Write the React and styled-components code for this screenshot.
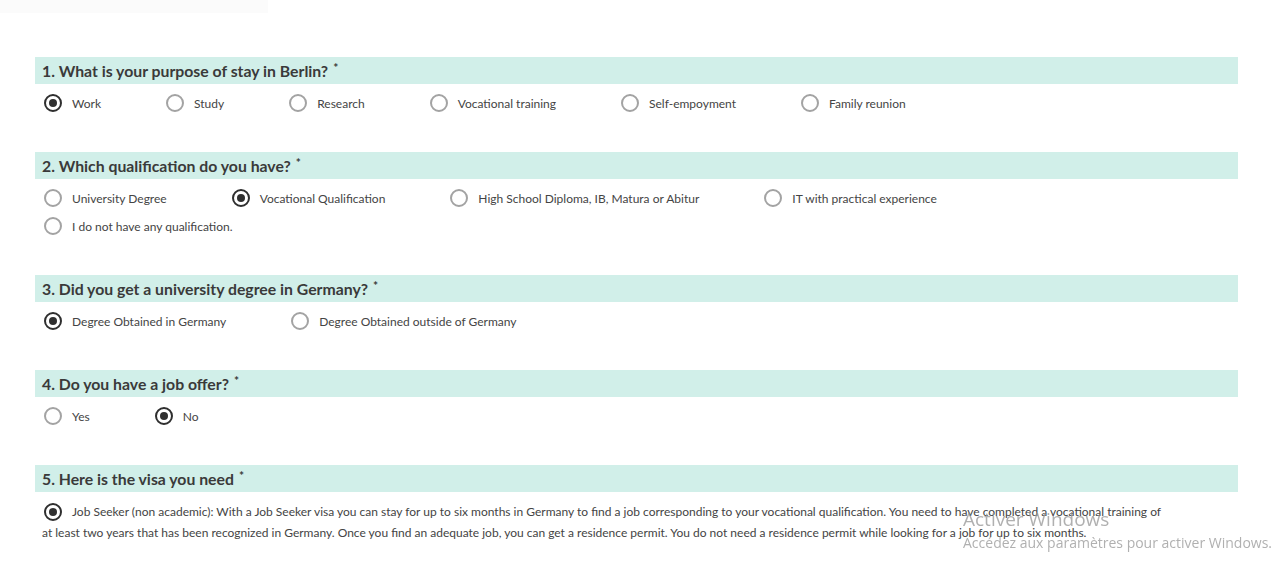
import React from "react";
import styled, { createGlobalStyle } from "styled-components";

const GlobalStyle = createGlobalStyle`
	body {
		margin: 0;
		background: #ffffff;
		font-family: Lato, "Open Sans", Arial, sans-serif;
		color: #444444;
	}
`;

const TopStrip = styled.div`
	width: 268px;
	height: 13px;
	background: #fbfbfb;
`;

const Form = styled.div`
	margin: 44px 46px 0 35px;
`;

const Section = styled.section`
	margin-bottom: 35px;
`;

const QuestionBar = styled.h2`
	margin: 0;
	height: 27px;
	display: flex;
	align-items: center;
	padding-left: 7px;
	background: #d1efe9;
	font-family: Lato, "Open Sans", sans-serif;
	font-weight: 700;
	font-size: 15.8px;
	color: #3a3a3a;

	sup {
		font-size: 12px;
		margin-left: 5px;
		position: relative;
		top: -3px;
	}
`;

const Options = styled.div`
	display: flex;
	flex-wrap: wrap;
	padding: 5px 50px 0 9px;
`;

const Option = styled.label`
	display: inline-flex;
	align-items: center;
	height: 28px;
	margin-right: 65px;
	font-size: 12px;
	color: #444444;
	cursor: pointer;
`;

const Radio = styled.span`
	display: inline-flex;
	align-items: center;
	justify-content: center;
	box-sizing: border-box;
	width: 18px;
	height: 18px;
	border-radius: 50%;
	border: 2px solid ${(p) => (p.$checked ? "#2f2f2f" : "#a3a3a3")};
	margin-right: 10px;
	flex-shrink: 0;
	vertical-align: middle;

	&::after {
		content: "";
		width: 8px;
		height: 8px;
		border-radius: 50%;
		background: #2f2f2f;
		display: ${(p) => (p.$checked ? "block" : "none")};
	}
`;

const VisaText = styled.p`
	margin: 9px 72px 0 7px;
	font-size: 12px;
	line-height: 21px;
	color: #444444;

	${Radio} {
		margin-left: 2px;
		position: relative;
		top: -1px;
	}
`;

const Watermark = styled.div`
	position: fixed;
	left: 963px;
	top: 507px;
	font-family: "Open Sans", "Noto Sans", sans-serif;
	color: rgba(150, 150, 150, 0.75);

	.big {
		font-size: 19px;
		line-height: 24px;
	}
	.small {
		font-size: 14px;
		line-height: 22px;
		margin-top: 1px;
	}
`;

const questions = [
	{
		title: "1. What is your purpose of stay in Berlin?",
		options: ["Work", "Study", "Research", "Vocational training", "Self-empoyment", "Family reunion"],
		checked: 0,
	},
	{
		title: "2. Which qualification do you have?",
		options: [
			"University Degree",
			"Vocational Qualification",
			"High School Diploma, IB, Matura or Abitur",
			"IT with practical experience",
			"I do not have any qualification.",
		],
		checked: 1,
	},
	{
		title: "3. Did you get a university degree in Germany?",
		options: ["Degree Obtained in Germany", "Degree Obtained outside of Germany"],
		checked: 0,
	},
	{
		title: "4. Do you have a job offer?",
		options: ["Yes", "No"],
		checked: 1,
	},
];

export default function App() {
	return (
		<>
			<GlobalStyle />
			<TopStrip />
			<Form>
				{questions.map((q) => (
					<Section key={q.title}>
						<QuestionBar>
							{q.title}
							<sup>*</sup>
						</QuestionBar>
						<Options>
							{q.options.map((opt, i) => (
								<Option key={opt}>
									<Radio $checked={i === q.checked} />
									{opt}
								</Option>
							))}
						</Options>
					</Section>
				))}
				<Section>
					<QuestionBar>
						5. Here is the visa you need
						<sup>*</sup>
					</QuestionBar>
					<VisaText>
						<Radio $checked />
						Job Seeker (non academic): With a Job Seeker visa you can stay for up to six months in Germany to
						find a job corresponding to your vocational qualification. You need to have completed a vocational
						training of at least two years that has been recognized in Germany. Once you find an adequate job,
						you can get a residence permit. You do not need a residence permit while looking for a job for up to
						six months.
					</VisaText>
				</Section>
			</Form>
			<Watermark>
				<div className="big">Activer Windows</div>
				<div className="small">Accédez aux paramètres pour activer Windows.</div>
			</Watermark>
		</>
	);
}
